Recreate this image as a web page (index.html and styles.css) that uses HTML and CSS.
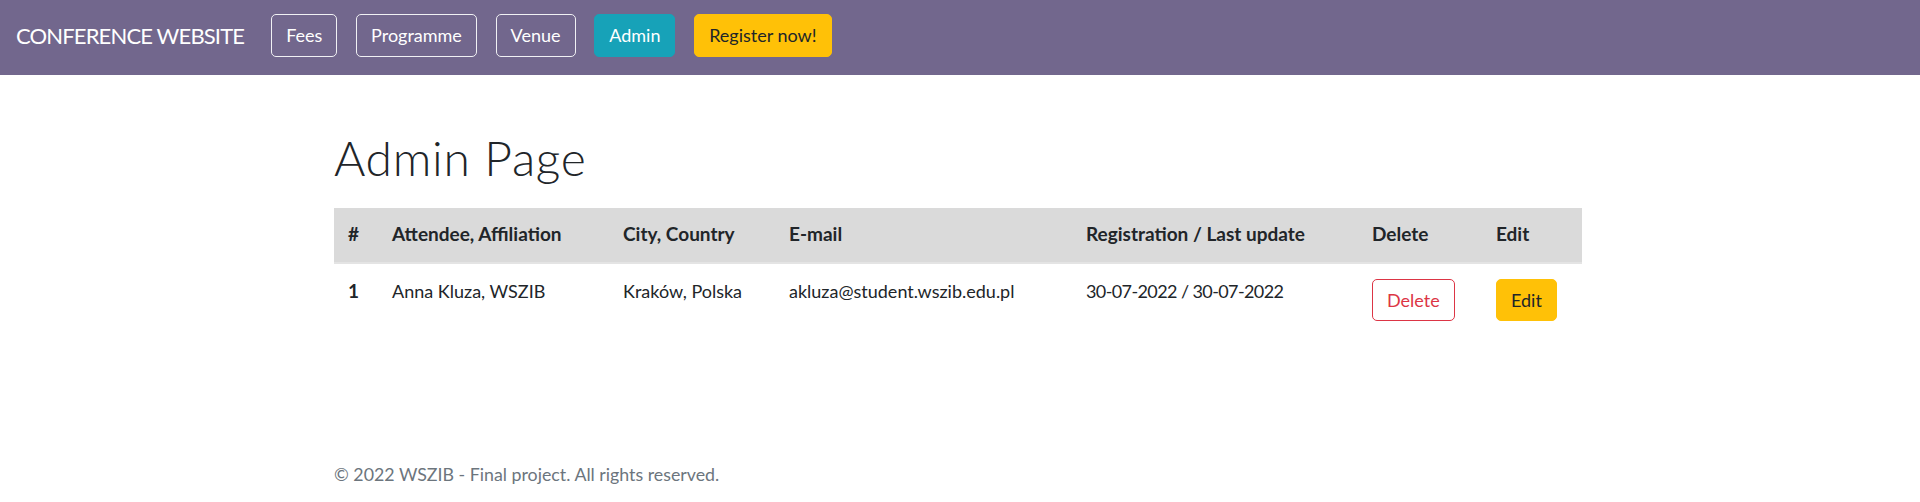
FILE: index.html
```html
<!DOCTYPE html>
<html lang="en">
<head>
<meta charset="utf-8">
<title>Admin Page</title>
<link rel="stylesheet" href="styles.css">
</head>
<body>
<nav class="navbar">
  <a class="brand" href="#">CONFERENCE WEBSITE</a>
  <ul class="nav-links">
    <li><a class="btn btn-outline-light" href="#">Fees</a></li>
    <li><a class="btn btn-outline-light" href="#">Programme</a></li>
    <li><a class="btn btn-outline-light" href="#">Venue</a></li>
    <li><a class="btn btn-info" href="#">Admin</a></li>
    <li><a class="btn btn-warning" href="#">Register now!</a></li>
  </ul>
</nav>
<main class="container">
  <h1 class="page-title">Admin Page</h1>
  <table class="admin-table">
    <colgroup>
      <col class="col-num">
      <col class="col-name">
      <col class="col-city">
      <col class="col-mail">
      <col class="col-date">
      <col class="col-del">
      <col class="col-edit">
    </colgroup>
    <thead>
      <tr>
        <th>#</th>
        <th>Attendee, Affiliation</th>
        <th>City, Country</th>
        <th>E-mail</th>
        <th>Registration / Last update</th>
        <th>Delete</th>
        <th>Edit</th>
      </tr>
    </thead>
    <tbody>
      <tr>
        <th>1</th>
        <td>Anna Kluza, WSZIB</td>
        <td>Kraków, Polska</td>
        <td>akluza@student.wszib.edu.pl</td>
        <td class="cell-date">30-07-2022 / 30-07-2022</td>
        <td class="cell-action"><button class="btn btn-outline-danger" type="button">Delete</button></td>
        <td class="cell-action"><button class="btn btn-warning" type="button">Edit</button></td>
      </tr>
    </tbody>
  </table>
</main>
<footer class="container footer">© 2022 WSZIB - Final project. All rights reserved.</footer>
</body>
</html>
```
FILE: styles.css
```css
body {
  margin: 0;
  font-family: Lato, "Segoe UI", sans-serif;
  font-size: 18px;
  line-height: 1.5;
  color: #212529;
  background: #fff;
}

.navbar {
  display: flex;
  align-items: center;
  gap: 27px;
  height: 75px;
  box-sizing: border-box;
  padding: 0 16px 4px;
  background: #72678d;
}

.brand {
  color: #fff;
  font-size: 22px;
  letter-spacing: -0.85px;
  line-height: 1.5;
  text-decoration: none;
}

.nav-links {
  display: flex;
  gap: 18.7px;
  list-style: none;
  margin: 0;
  padding: 0;
}

.btn {
  display: inline-block;
  font-family: inherit;
  font-size: 18px;
  line-height: 28.5px;
  padding: 6px 14px;
  border: 1px solid transparent;
  border-radius: 5px;
  text-decoration: none;
  cursor: pointer;
  background: none;
}

.btn-outline-light {
  color: #fff;
  border-color: #f1f1f4;
}

.btn-info {
  background: #17a2b8;
  border-color: #17a2b8;
  color: #fff;
}

.btn-warning {
  background: #ffc107;
  border-color: #ffc107;
  color: #212529;
}

.btn-outline-danger {
  background: #fff;
  border-color: #dc3545;
  color: #dc3545;
}

.container {
  width: 1248px;
  margin: 0 auto;
  padding-right: 4px;
}

.page-title {
  font-size: 48px;
  font-weight: 300;
  letter-spacing: 0.7px;
  line-height: 1.2;
  margin: 54px 0 21px;
}

.admin-table {
  width: 100%;
  border-collapse: collapse;
  table-layout: fixed;
  line-height: 28.5px;
}

.col-num { width: 44px; }
.col-name { width: 231px; }
.col-city { width: 166px; }
.col-mail { width: 297px; }
.col-date { width: 286px; }
.col-del { width: 124px; }
.col-edit { width: 100px; }

.admin-table thead th {
  background: #dadada;
  border-bottom: 2px solid #e4e4e4;
  padding: 12px 14px 13.5px;
  text-align: left;
  font-size: 19px;
  font-weight: 700;
  white-space: nowrap;
}

.admin-table tbody th,
.admin-table tbody td {
  padding: 13.5px 14px;
  text-align: left;
  vertical-align: top;
  white-space: nowrap;
}

.admin-table tbody th {
  font-size: 19px;
  font-weight: 700;
}

.admin-table .cell-date {
  letter-spacing: -0.6px;
}

.admin-table .cell-action {
  padding-top: 15px;
}

.cell-action .btn {
  display: block;
}

.footer {
  margin-top: 126px;
  font-size: 17.8px;
  color: #6c757d;
}
```
